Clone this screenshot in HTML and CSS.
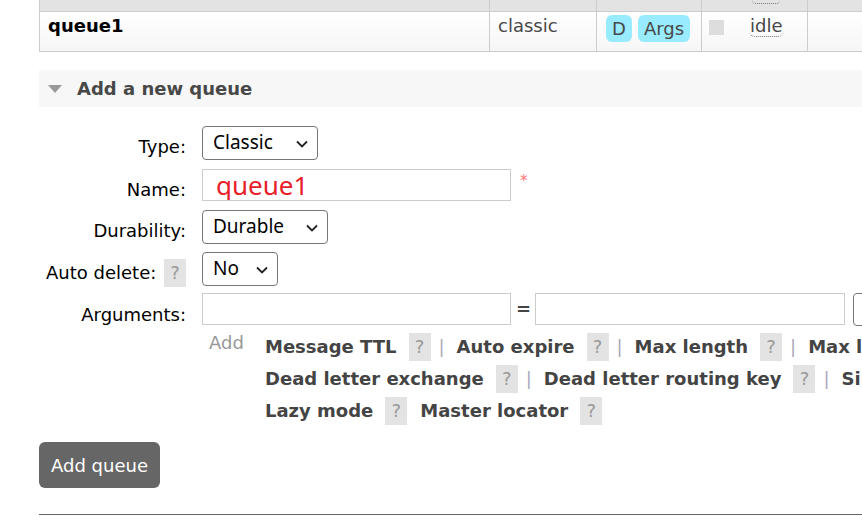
FILE: index.html
```html
<!DOCTYPE html>
<html>
<head>
<meta charset="utf-8">
<title>Queues</title>
<link rel="stylesheet" href="styles.css">
</head>
<body>
<div class="page">
  <div class="list">
    <div class="row head">
      <div class="cell c1"></div>
      <div class="cell c2"></div>
      <div class="cell c3"></div>
      <div class="cell c4"><span class="abbr-stub"></span></div>
      <div class="cell c5"></div>
    </div>
    <div class="row data">
      <div class="cell c1 qname">queue1</div>
      <div class="cell c2">classic</div>
      <div class="cell c3"><span class="badge">D</span><span class="badge">Args</span></div>
      <div class="cell c4"><span class="state-box"></span><span class="abbr">idle</span></div>
      <div class="cell c5"></div>
    </div>
  </div>

  <div class="section-head">
    <span class="tri"></span>
    <h2>Add a new queue</h2>
  </div>

  <div class="form">
    <div class="label">Type:</div>
    <div class="field">
      <div class="select w-type"><span>Classic</span><svg class="chev" width="12" height="8" viewBox="0 0 12 8"><path d="M1 1.5 L6 6.5 L11 1.5" fill="none" stroke="#222" stroke-width="1.8"/></svg></div>
    </div>

    <div class="label">Name:</div>
    <div class="field">
      <input class="text name-input" type="text" value="queue1">
      <span class="mand">*</span>
    </div>

    <div class="label">Durability:</div>
    <div class="field">
      <div class="select w-dur"><span>Durable</span><svg class="chev" width="12" height="8" viewBox="0 0 12 8"><path d="M1 1.5 L6 6.5 L11 1.5" fill="none" stroke="#222" stroke-width="1.8"/></svg></div>
    </div>

    <div class="label label-help">Auto delete: <span class="help">?</span></div>
    <div class="field">
      <div class="select w-no"><span>No</span><svg class="chev" width="12" height="8" viewBox="0 0 12 8"><path d="M1 1.5 L6 6.5 L11 1.5" fill="none" stroke="#222" stroke-width="1.8"/></svg></div>
    </div>

    <div class="label label-args">Arguments:</div>
    <div class="field args">
      <div class="arg-inputs">
        <input class="text arg" type="text">
        <span class="eq">=</span>
        <input class="text arg arg-val" type="text">
        <div class="select w-kind"></div>
      </div>
      <div class="arg-links">
        <div class="add">Add</div>
        <div class="links">
          <div class="line"><span class="lnk">Message TTL</span><span class="help">?</span><span class="sep">|</span><span class="lnk">Auto expire</span><span class="help">?</span><span class="sep">|</span><span class="lnk">Max length</span><span class="help">?</span><span class="sep">|</span><span class="lnk">Max length bytes</span></div>
          <div class="line"><span class="lnk">Dead letter exchange</span><span class="help">?</span><span class="sep">|</span><span class="lnk">Dead letter routing key</span><span class="help">?</span><span class="sep">|</span><span class="lnk">Single active consumer</span></div>
          <div class="line"><span class="lnk">Lazy mode</span><span class="help">?</span><span class="lnk next">Master locator</span><span class="help">?</span></div>
        </div>
      </div>
    </div>
  </div>

  <button class="btn" type="button">Add queue</button>
  <div class="rule"></div>
</div>
</body>
</html>
```

FILE: styles.css
```css
html, body {
  margin: 0;
  padding: 0;
}
body {
  width: 862px;
  height: 522px;
  overflow: hidden;
  background: #fff;
  font-family: "DejaVu Sans", Verdana, sans-serif;
  font-size: 18px;
  color: #000;
}
.page {
  padding-left: 39px;
  width: 1100px;
}

/* list table */
.list {
  width: 1000px;
}
.row {
  display: flex;
}
.cell {
  box-sizing: border-box;
  border-left: 1px solid #ccc;
  padding: 3px 8px 0 8px;
  line-height: 22px;
  white-space: nowrap;
}
.c1 { width: 450px; }
.c2 { width: 107px; }
.c3 { width: 105px; padding-left: 9px; }
.c4 { width: 106px; padding-left: 7px; }
.c5 { width: 232px; }
.head {
  height: 12px;
  background: #e3e3e3;
  border-bottom: 1px solid #ccc;
  box-sizing: border-box;
}
.head .cell {
  padding: 0;
  height: 11px;
}
.abbr-stub {
  display: block;
  margin-left: 50px;
  width: 28px;
  height: 3px;
  border-bottom: 1px dotted #777;
  border-radius: 0 0 6px 6px;
}
.data {
  height: 40px;
  box-sizing: border-box;
  border-bottom: 1px solid #ccc;
  background: linear-gradient(#fff, #f6f6f6);
}
.qname {
  font-weight: bold;
  color: #000;
}
.c2 {
  color: #484848;
}
.badge {
  display: inline-block;
  height: 27px;
  line-height: 28px;
  padding: 0 6px;
  margin-right: 6px;
  border-radius: 6px;
  background: #99ebff;
  color: #484848;
}
.state-box {
  display: inline-block;
  width: 15px;
  height: 15px;
  margin-top: 5px;
  background: #ddd;
  vertical-align: top;
}
.abbr {
  display: inline-block;
  margin-left: 25px;
  color: #484848;
  line-height: 20px;
  border-bottom: 1px dotted #777;
  border-radius: 0 0 6px 6px;
  padding: 0 1px;
}

/* section header */
.section-head {
  margin-top: 18px;
  height: 37px;
  background: #f7f7f7;
  display: flex;
  align-items: center;
  padding-left: 9px;
}
.tri {
  width: 0;
  height: 0;
  border-left: 7.5px solid transparent;
  border-right: 7.5px solid transparent;
  border-top: 8px solid #999;
  margin-top: 1px;
}
.section-head h2 {
  margin: 0 0 0 15px;
  font-size: 18px;
  font-weight: bold;
  color: #484848;
  line-height: 22px;
}

/* form */
.form {
  margin-top: 19px;
  display: grid;
  grid-template-columns: 147px 1fr;
  grid-template-rows: 43px 41px 42px 41px auto;
  column-gap: 16px;
  align-items: start;
}
.label {
  box-sizing: border-box;
  height: 32px;
  text-align: right;
  padding-top: 10px;
  line-height: 22px;
  color: #000;
  white-space: nowrap;
}
.label-help {
  padding-top: 7px;
}
.label-args {
  padding-top: 11px;
}
.field {
  display: flex;
  align-items: flex-start;
}
.select {
  box-sizing: border-box;
  height: 34px;
  border: 1px solid #767676;
  border-radius: 4px;
  background: #fff;
  display: flex;
  align-items: center;
  justify-content: space-between;
  padding: 0 9px 0 10px;
  font-family: "Noto Sans", "Open Sans", sans-serif;
  font-size: 19px;
  color: #000;
}
.select span {
  line-height: 26px;
  margin-top: -2px;
}
.chev {
  display: block;
  margin-top: 1px;
}
.w-type { width: 116px; }
.w-dur { width: 126px; }
.w-no { width: 76px; }
.w-kind {
  width: 80px;
  height: 33px;
  margin-left: 8px;
  flex: none;
}
.text {
  box-sizing: border-box;
  height: 32px;
  border: 1px solid #ccc;
  margin: 0;
  background: #fff;
  outline: none;
}
.name-input {
  width: 309px;
  padding: 0 0 0 13px;
  font-family: "Noto Sans", "Open Sans", sans-serif;
  font-size: 26px;
  line-height: 30px;
  color: #e8202a;
}
.mand {
  margin-left: 9px;
  margin-top: 2px;
  color: #f77;
  font-size: 15px;
  line-height: 20px;
}
.field.args {
  flex-direction: column;
}
.arg-inputs {
  display: flex;
  align-items: flex-start;
}
.arg {
  width: 309px;
  flex: none;
}
.arg-val {
  width: 310px;
}
.eq {
  margin: 0 4px 0 5px;
  line-height: 32px;
  font-weight: bold;
  color: #444;
}
.arg-links {
  margin-top: 1px;
  display: flex;
  white-space: nowrap;
}
.add {
  margin-left: 7px;
  width: 56px;
  color: #999;
  line-height: 32px;
  flex: none;
}
.links {
  padding-top: 4px;
}
.line {
  height: 32px;
  line-height: 32px;
}
.lnk {
  font-weight: bold;
  color: #444;
}
.lnk.next {
  margin-left: 13px;
}
.help {
  display: inline-block;
  width: 22px;
  height: 28px;
  line-height: 28px;
  margin-left: 12px;
  background: #e3e3e3;
  color: #999;
  text-align: center;
  font-weight: normal;
}
.label .help {
  margin-left: 2px;
}
.sep {
  display: inline-block;
  margin: 0 12px 0 8px;
  color: #aab;
  font-weight: normal;
}

/* button */
.btn {
  display: block;
  margin-top: 15px;
  width: 121px;
  height: 46px;
  padding: 0;
  border: none;
  border-radius: 6px;
  background: #666;
  color: #fff;
  font-family: "DejaVu Sans", Verdana, sans-serif;
  font-size: 18px;
  text-align: center;
}
.rule {
  margin-top: 26px;
  width: 900px;
  border-top: 1px solid #666;
}
```
